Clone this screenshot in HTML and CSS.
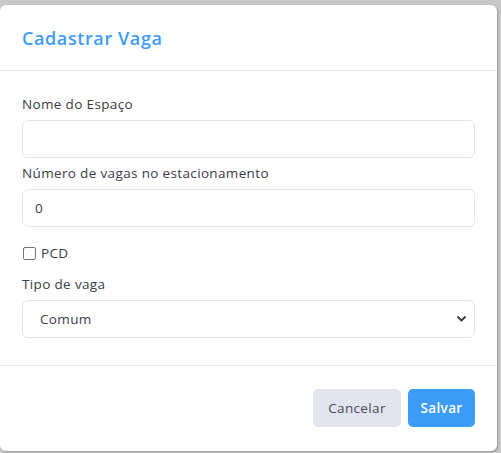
FILE: index.html
```html
<!DOCTYPE html>
<html lang="pt-BR">
<head>
<meta charset="utf-8">
<title>Cadastrar Vaga</title>
<link rel="stylesheet" href="styles.css">
</head>
<body>
<div class="modal">
  <div class="modal-header">
    <h2 class="modal-title">Cadastrar Vaga</h2>
  </div>
  <div class="modal-body">
    <div class="field">
      <label class="label">Nome do Espaço</label>
      <input class="control" type="text">
    </div>
    <div class="field">
      <label class="label">Número de vagas no estacionamento</label>
      <input class="control" type="text" value="0">
    </div>
    <label class="check">
      <span class="box"></span>
      <span>PCD</span>
    </label>
    <div class="field">
      <label class="label">Tipo de vaga</label>
      <div class="select">
        <span>Comum</span>
        <svg class="chev" width="9" height="6" viewBox="0 0 9 6"><path d="M1 1 L4.5 4.5 L8 1" fill="none" stroke="#343a40" stroke-width="1.8" stroke-linecap="round" stroke-linejoin="round"/></svg>
      </div>
    </div>
  </div>
  <div class="modal-footer">
    <button class="btn btn-light">Cancelar</button>
    <button class="btn btn-primary">Salvar</button>
  </div>
</div>
</body>
</html>
```

FILE: styles.css
```css
* { box-sizing: border-box; }
html, body { margin: 0; padding: 0; }
body {
  background: #c8c8c8;
  width: 501px;
  height: 453px;
  overflow: hidden;
  font-family: "Open Sans", "Noto Sans", sans-serif;
  color: #3b3b4a;
}
.modal {
  margin-top: 5px;
  width: 497px;
  height: 446px;
  background: #fff;
  border-radius: 6px;
  display: flex;
  flex-direction: column;
  box-shadow: 1px 1px 2px rgba(0,0,0,0.25);
}
.modal-header {
  height: 66px;
  border-bottom: 1px solid #e9e9ef;
  padding: 0 22px;
  display: flex;
  align-items: center;
}
.modal-title {
  margin: 0;
  font-size: 18px;
  font-weight: 600;
  color: #3d9cf5;
  letter-spacing: 0.6px;
}
.modal-body {
  padding: 23px 22px 0 22px;
  height: 295px;
  border-bottom: 1px solid #e9e9ef;
}
.field { display: flex; flex-direction: column; }
.label {
  font-size: 13.5px;
  line-height: 21px;
  margin-bottom: 5px;
  color: #3b3b4a;
  letter-spacing: 0.35px;
}
.control {
  height: 38px;
  width: 100%;
  border: 1px solid #e3e3ed;
  border-radius: 6px;
  padding: 0 12px;
  font-family: inherit;
  font-size: 13.5px;
  color: #3b3b4a;
  margin-bottom: 5px;
  outline: none;
}
.check {
  display: flex;
  align-items: center;
  gap: 5px;
  margin: 13px 0 13px 1px;
  font-size: 13.5px;
  line-height: 16px;
  letter-spacing: 0.35px;
}
.box {
  width: 13px;
  height: 13px;
  border: 1px solid #767676;
  border-radius: 2px;
}
.select {
  height: 38px;
  border: 1px solid #e3e3ed;
  border-radius: 6px;
  padding: 0 8px 0 17px;
  display: flex;
  align-items: center;
  justify-content: space-between;
  font-size: 13.5px;
  letter-spacing: 0.35px;
}
.modal-footer {
  flex: 1;
  display: flex;
  justify-content: flex-end;
  align-items: center;
  gap: 7px;
  padding: 0 22px 2px 0;
}
.btn {
  height: 38px;
  border: none;
  border-radius: 5px;
  font-family: inherit;
  font-size: 13.5px;
  padding: 0;
  letter-spacing: 0.35px;
}
.btn-light { background: #e3e5ee; color: #4a4a5a; width: 88px; }
.btn-primary { background: #3d9cf8; color: #fff; width: 67px; font-weight: 600; }
```
